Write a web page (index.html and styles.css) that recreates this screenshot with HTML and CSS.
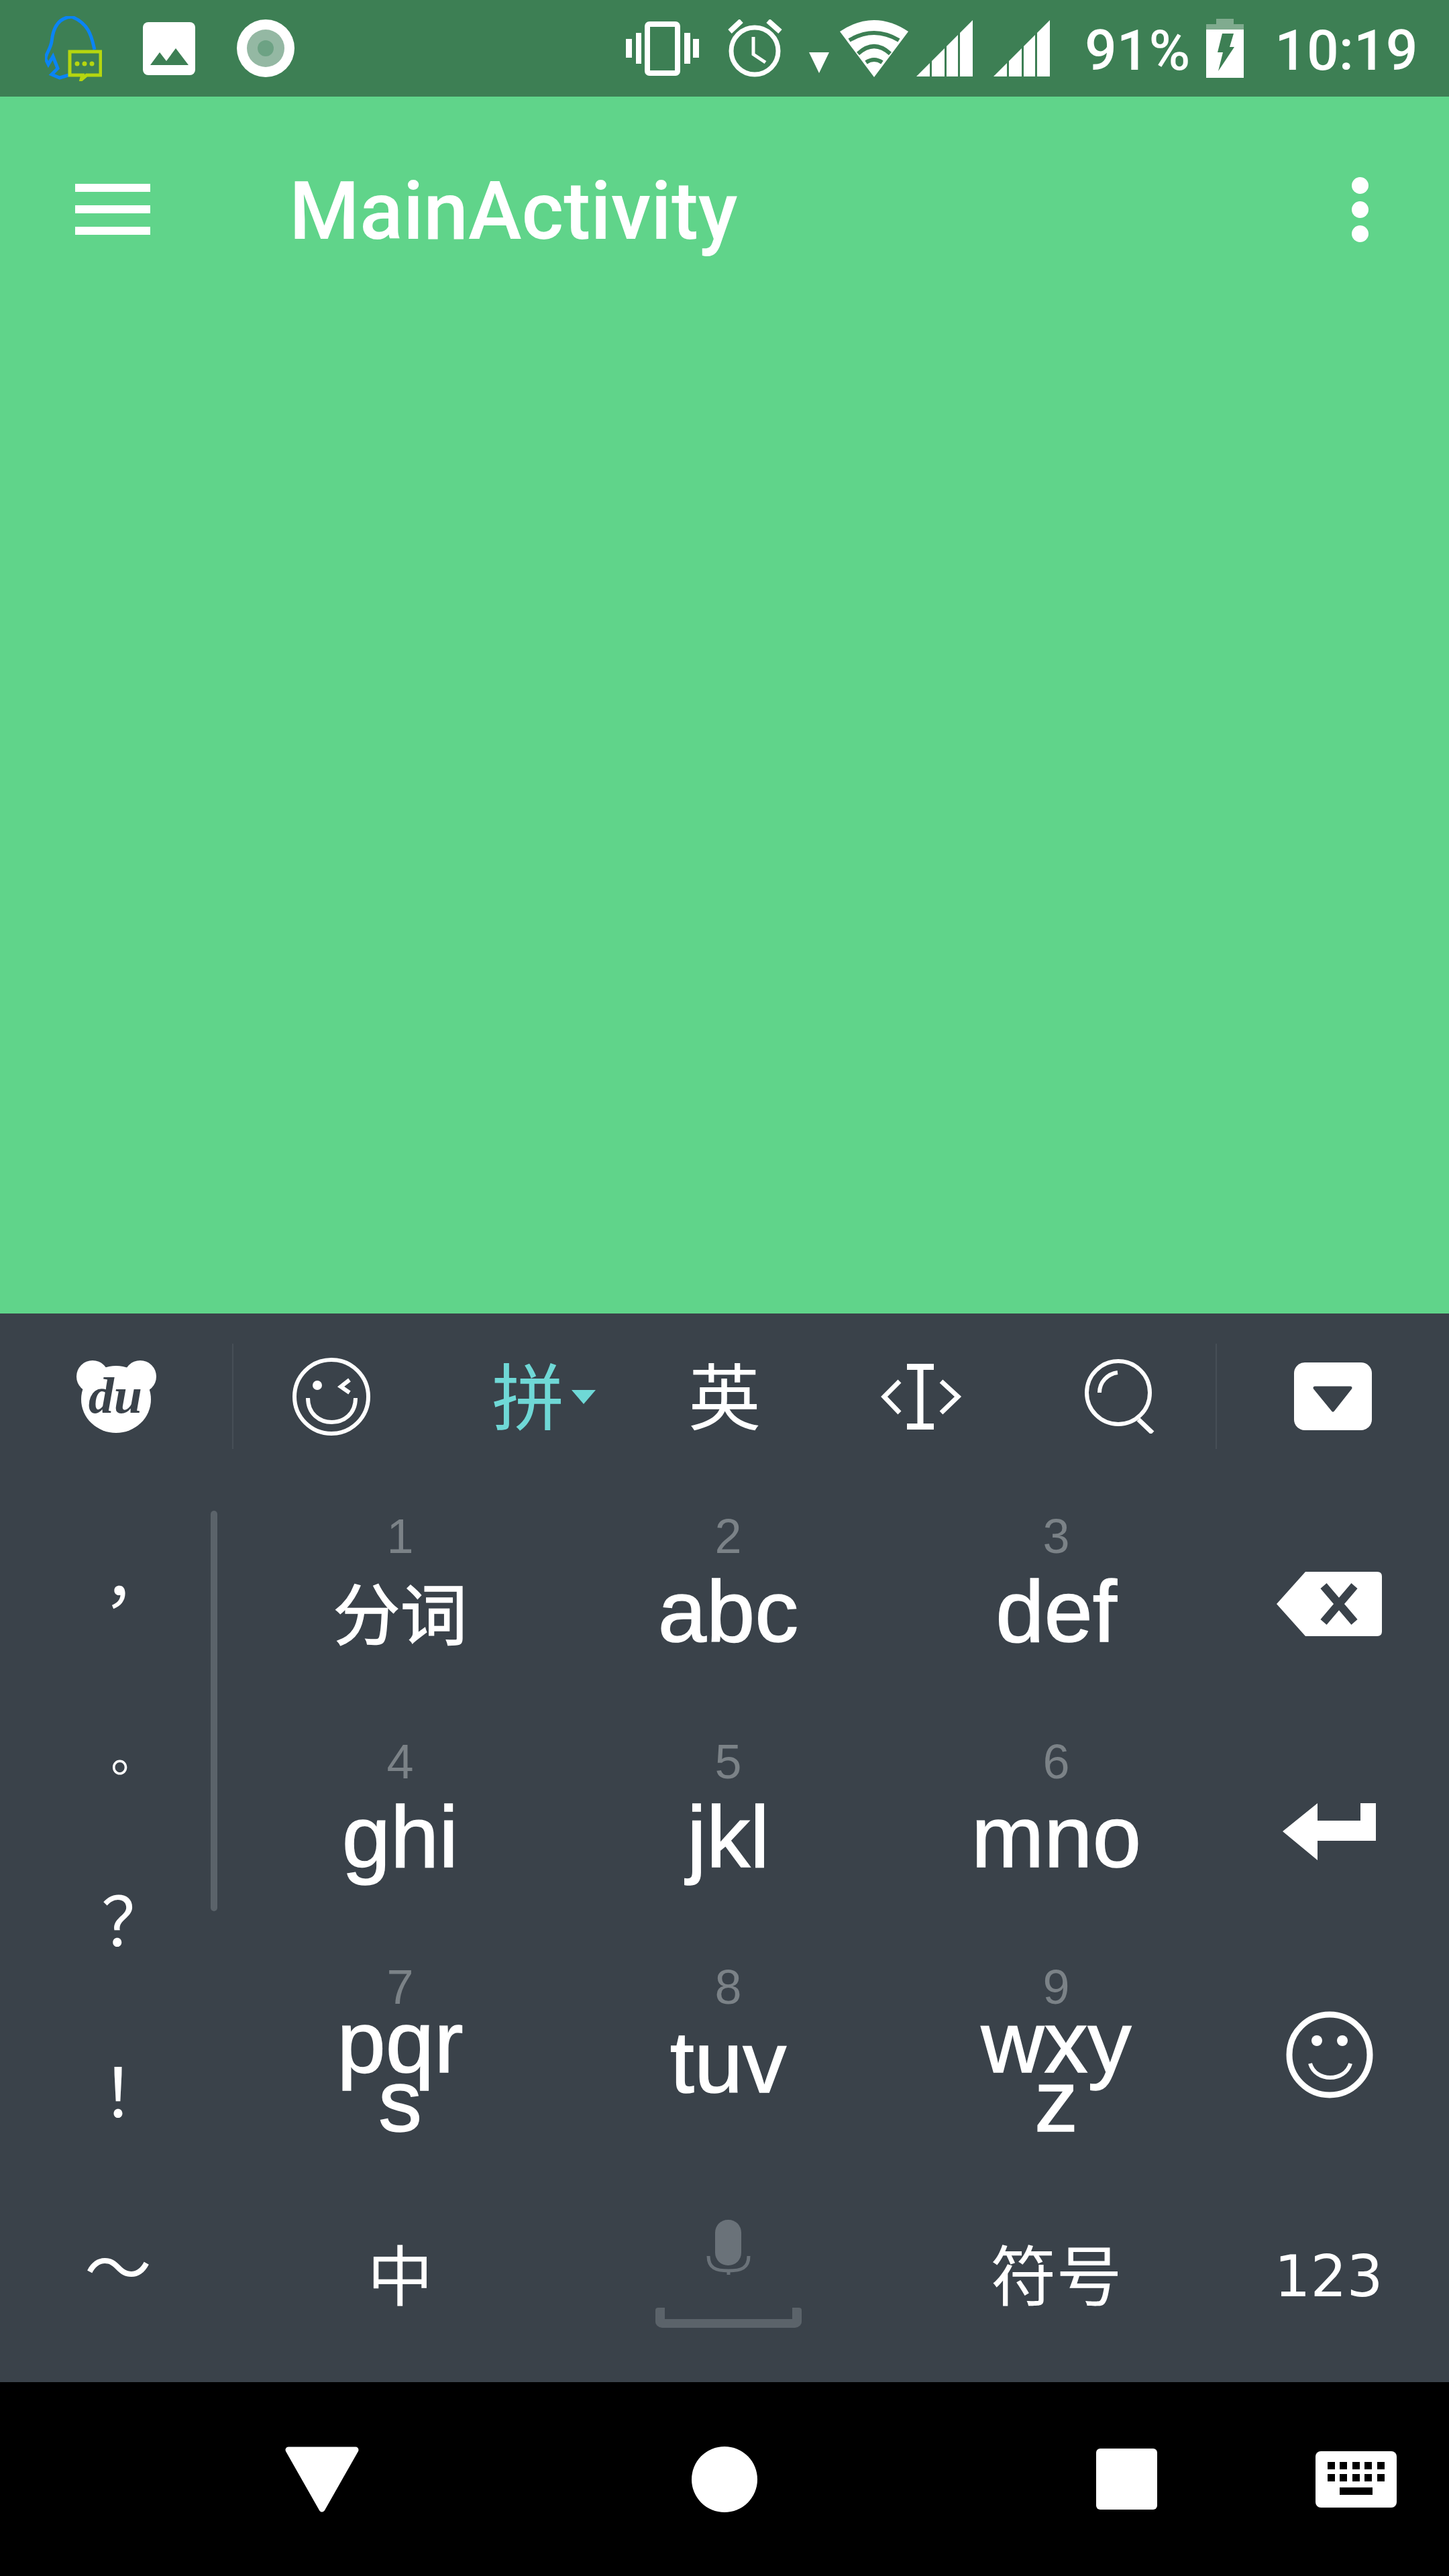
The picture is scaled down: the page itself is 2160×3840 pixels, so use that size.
FILE: index.html
```html
<!DOCTYPE html>
<html lang="zh-CN">
<head>
    <meta charset="UTF-8">
    <title>MainActivity</title>
    <link rel="stylesheet" href="styles.css">
</head>
<body>
    <div class="phone">
        <!-- Status bar -->
        <header class="status-bar">
            <svg class="st-chat" viewBox="0 0 85 97">
                <path d="M74 50 C70 35 68 12 40 1 C20 2 12 18 10 38 C8 50 1 56 1 64 L5 72 L12 60 L19 78 L10 87 L22 92 L35 88" fill="none" stroke="#0a84f5" stroke-width="5"/>
                <path d="M37 53 H83 V88 H62 L54 95 L56 88 H37 Z" fill="#3d7f54" stroke="#b5d60f" stroke-width="5"/>
                <circle cx="48" cy="71" r="3.5" fill="#b5d60f"/><circle cx="59" cy="71" r="3.5" fill="#b5d60f"/><circle cx="70" cy="71" r="3.5" fill="#b5d60f"/>
            </svg>
            <svg class="st-image" viewBox="0 0 78 79">
                <rect width="78" height="79" rx="8" fill="#fff"/>
                <path d="M11 64 L25 45 L35 58 L49 39 L68 64 Z" fill="#3d7f54"/>
            </svg>
            <svg class="st-record" viewBox="0 0 86 86">
                <circle cx="43" cy="43" r="43" fill="#fff"/><circle cx="43" cy="43" r="28" fill="#94b8a3"/><circle cx="43" cy="43" r="12" fill="#6da284"/>
            </svg>
            <svg class="st-vibrate" viewBox="0 0 109 81">
                <rect x="32" y="4" width="45" height="73" rx="3" fill="none" stroke="#fff" stroke-width="8"/>
                <path d="M0 26H9V54H0Z M15 17H23V63H15Z M87 17H96V63H87Z M100 26H109V54H100Z" fill="#fff"/>
            </svg>
            <svg class="st-alarm" viewBox="0 0 85 86">
                <circle cx="42" cy="47" r="35" fill="none" stroke="#fff" stroke-width="7"/>
                <path d="M40 26V52L58 64" fill="none" stroke="#fff" stroke-width="5"/>
                <path d="M22 2L5 18 M62 2L80 18" stroke="#fff" stroke-width="8"/>
            </svg>
            <svg class="st-arrow" viewBox="0 0 30 70"><path d="M0 39H30L15 70Z" fill="#fff"/></svg>
            <svg class="st-wifi" viewBox="0 0 102 85">
                <path d="M51 85 L0 17 Q51 -17 102 17 Z" fill="#fff"/>
                <path d="M14 30Q51 8 88 30 M27 50Q51 28 75 50 M39 63Q51 55 63 63" fill="none" stroke="#3d7f54" stroke-width="6"/>
            </svg>
            <svg class="st-signal" viewBox="0 0 84 84"><path d="M0 84L20 64V84Z M23 61L42 42V84H23Z M45 39L62 22V84H45Z M65 19L84 0V84H65Z" fill="#fff"/></svg>
            <svg class="st-signal st-signal-2" viewBox="0 0 84 84"><path d="M0 84L20 64V84Z M23 61L42 42V84H23Z M45 39L62 22V84H45Z M65 19L84 0V84H65Z" fill="#fff"/></svg>
            <span class="st-text st-percent">91%</span>
            <svg class="st-battery" viewBox="0 0 56 88">
                <path d="M15 0H41V8H56V16H0V8H15Z" fill="#fff" opacity="0.35"/>
                <rect y="16" width="56" height="72" fill="#fff"/>
                <path d="M24 22H41L35 42H42L18 78L25 50H17Z" fill="#3d7f54"/>
            </svg>
            <span class="st-text st-clock">10:19</span>
        </header>

        <!-- App area -->
        <main class="app">
            <div class="toolbar">
                <div class="menu-icon"><span></span><span></span><span></span></div>
                <h1 class="title">MainActivity</h1>
                <div class="more-icon"><span></span><span></span><span></span></div>
            </div>
        </main>

        <!-- Keyboard -->
        <section class="keyboard">
            <div class="kb-bar">
                <div class="bar-cell bar-left">
                    <svg class="ic-bear" viewBox="0 0 119 108">
                        <circle cx="24" cy="24" r="24" fill="#fff"/><circle cx="95" cy="24" r="24" fill="#fff"/>
                        <ellipse cx="59" cy="58" rx="52" ry="50" fill="#fff"/>
                        <text class="bear-text" x="58" y="78">du</text>
                    </svg>
                </div>
                <div class="bar-cell">
                    <svg class="ic-wink" viewBox="0 0 116 116">
                        <circle cx="58" cy="58" r="55" fill="none" stroke="#fff" stroke-width="6"/>
                        <circle cx="37" cy="41" r="7" fill="#fff"/>
                        <path d="M85 33L72 43L85 52" fill="none" stroke="#fff" stroke-width="6"/>
                        <path d="M23 60C23 108 94 108 94 60" fill="none" stroke="#fff" stroke-width="6"/>
                    </svg>
                </div>
                <div class="bar-cell bar-text bar-active">拼<span class="caret"></span></div>
                <div class="bar-cell bar-text">英</div>
                <div class="bar-cell">
                    <svg class="ic-cursor" viewBox="0 0 121 98">
                        <path d="M40 4.500H80 M40 93.500H80 M60 4V94" fill="none" stroke="#fff" stroke-width="9"/>
                        <path d="M29 26L6 49L29 73 M91 26L116 49L91 73" fill="none" stroke="#fff" stroke-width="7"/>
                    </svg>
                </div>
                <div class="bar-cell">
                    <svg class="ic-search" viewBox="0 0 104 111">
                        <circle cx="50" cy="50" r="47" fill="none" stroke="#fff" stroke-width="6"/>
                        <path d="M80 90L101 110" stroke="#fff" stroke-width="7"/>
                        <path d="M22 50C22 34 34 22 49 20" fill="none" stroke="#fff" stroke-width="6"/>
                    </svg>
                </div>
                <div class="bar-cell bar-right">
                    <svg class="ic-collapse" viewBox="0 0 116 101">
                        <rect width="116" height="101" rx="16" fill="#fff"/>
                        <path d="M31 38H84L58 71Z" fill="#3a424a" stroke="#3a424a" stroke-width="5" stroke-linejoin="round"/>
                    </svg>
                </div>
            </div>

            <div class="keypad">
                <div class="punct-list">
                    <div class="punct punct-comma">，</div>
                    <div class="punct punct-stop">。</div>
                    <div class="punct punct-ask">？</div>
                    <div class="punct punct-bang">！</div>
                    <div class="punct punct-tilde">～</div>
                </div>
                <div class="divider"></div>

                <div class="key"><span class="num">1</span><span class="letters cjk">分词</span></div>
                <div class="key"><span class="num">2</span><span class="letters">abc</span></div>
                <div class="key"><span class="num">3</span><span class="letters">def</span></div>
                <div class="side-key">
                    <svg class="ic-back" viewBox="0 0 157 96">
                        <path d="M43 0H150Q157 0 157 7V89Q157 96 150 96H43L0 48Z" fill="#fff"/>
                        <path d="M70 21L116 75 M116 21L70 75" stroke="#3a424a" stroke-width="12"/>
                    </svg>
                </div>

                <div class="key"><span class="num">4</span><span class="letters">ghi</span></div>
                <div class="key"><span class="num">5</span><span class="letters">jkl</span></div>
                <div class="key"><span class="num">6</span><span class="letters">mno</span></div>
                <div class="side-key">
                    <svg class="ic-enter" viewBox="0 0 139 85">
                        <path d="M0 42L52 0V26H116V0H139V56H52V85Z" fill="#fff"/>
                    </svg>
                </div>

                <div class="key"><span class="num">7</span><span class="letters letters-wrap">pqr<br>s</span></div>
                <div class="key"><span class="num">8</span><span class="letters">tuv</span></div>
                <div class="key"><span class="num">9</span><span class="letters letters-wrap">wxy<br>z</span></div>
                <div class="side-key">
                    <svg class="ic-smile" viewBox="0 0 130 130">
                        <circle cx="65" cy="65" r="60" fill="none" stroke="#fff" stroke-width="9"/>
                        <circle cx="46" cy="44" r="8" fill="#fff"/><circle cx="84" cy="44" r="8" fill="#fff"/>
                        <path d="M36 78C44 106 88 106 96 78" fill="none" stroke="#fff" stroke-width="6"/>
                    </svg>
                </div>

                <div class="bottom-key cjk">中</div>
                <div class="bottom-key space-key">
                    <svg class="ic-mic" viewBox="0 0 66 82">
                        <rect x="13" y="0" width="39" height="68" rx="19" fill="#6a7279"/>
                        <path d="M3 54C3 72 14 76 33 76C52 76 63 72 63 54" fill="none" stroke="#6a7279" stroke-width="5"/>
                        <path d="M33 74V82" stroke="#6a7279" stroke-width="5"/>
                    </svg>
                    <div class="space-bracket"></div>
                </div>
                <div class="bottom-key cjk symbols">符号</div>
                <div class="side-key nums">123</div>
            </div>
        </section>

        <!-- Navigation bar -->
        <footer class="nav-bar">
            <svg class="nav-back" viewBox="0 0 112 98"><path d="M6 5H106L56 93Z" fill="#fff" stroke="#fff" stroke-width="9" stroke-linejoin="round"/></svg>
            <div class="nav-home"></div>
            <div class="nav-recent"></div>
            <svg class="nav-keyboard" viewBox="0 0 121 84">
                <rect width="121" height="84" rx="8" fill="#fff"/>
                <path d="M18 16h11v11h-11z M36 16h11v11h-11z M55 16h11v11h-11z M73 16h11v11h-11z M92 16h11v11h-11z M18 34h11v11h-11z M36 34h11v11h-11z M55 34h11v11h-11z M73 34h11v11h-11z M92 34h11v11h-11z M36 54h49v11h-49z" fill="#000"/>
            </svg>
        </footer>
    </div>
</body>
</html>
```

FILE: styles.css
```css
body {
    margin: 0;
    background-color: #000;
    font-family: "Liberation Sans", Arial, sans-serif;
}
svg {
    display: block;
    flex-shrink: 0;
}
.phone {
    width: 2160px;
    height: 3840px;
    display: flex;
    flex-direction: column;
    overflow: hidden;
}

/* status bar */
.status-bar {
    height: 144px;
    background-color: #3d7f54;
    display: flex;
    align-items: center;
    color: #fff;
}
.st-chat { width: 85px; height: 97px; margin-left: 67px; }
.st-image { width: 78px; height: 79px; margin-left: 61px; }
.st-record { width: 86px; height: 86px; margin-left: 62px; }
.st-vibrate { width: 109px; height: 81px; margin-left: 494px; }
.st-alarm { width: 85px; height: 86px; margin-left: 41px; }
.st-arrow { width: 30px; height: 70px; margin-left: 38px; margin-top: 4px; }
.st-wifi { width: 102px; height: 85px; margin-left: 16px; }
.st-signal { width: 84px; height: 84px; margin-left: 12px; }
.st-signal-2 { margin-left: 31px; }
.st-battery { width: 56px; height: 88px; margin-left: 24px; }
.st-text {
    font-family: Roboto, sans-serif;
    font-size: 84px;
    font-weight: 500;
    line-height: 144px;
    padding-top: 8px;
}
.st-percent { margin-left: 52px; }
.st-clock { margin-left: 46px; }

/* app area */
.app {
    height: 1814px;
    background-color: #60d48a;
}
.toolbar {
    height: 336px;
    display: flex;
    align-items: center;
    color: #fff;
}
.menu-icon {
    width: 112px;
    margin-left: 112px;
    display: flex;
    flex-direction: column;
    gap: 20px;
}
.menu-icon span {
    height: 12px;
    background-color: #fff;
}
.title {
    margin: 6px 0 0 207px;
    font-family: Roboto, sans-serif;
    font-size: 120px;
    font-weight: 500;
    flex: 1;
}
.more-icon {
    margin-right: 120px;
    display: flex;
    flex-direction: column;
    gap: 11px;
}
.more-icon span {
    width: 25px;
    height: 25px;
    border-radius: 50%;
    background-color: #fff;
}

/* keyboard */
.keyboard {
    height: 1593px;
    background-color: #3a424a;
    color: #fff;
}
.kb-bar {
    height: 157px;
    padding: 45px 0 55px;
    display: grid;
    grid-template-columns: 348px repeat(5, 1fr) 348px;
    grid-template-rows: 157px;
}
.bar-cell {
    position: relative;
    display: flex;
    align-items: center;
    justify-content: center;
}
.bar-left { border-right: 2px solid #464e56; }
.bar-right { border-left: 2px solid #464e56; }
.bar-text {
    font-family: "Noto Sans CJK SC", sans-serif;
    font-size: 108px;
    line-height: 108px;
    padding-bottom: 12px;
    box-sizing: border-box;
}
.bar-active { color: #6fd8d6; }
.caret {
    position: absolute;
    left: 211px;
    top: 69px;
    width: 0;
    height: 0;
    border-left: 18px solid transparent;
    border-right: 18px solid transparent;
    border-top: 21px solid #6fd8d6;
}
.ic-bear { width: 119px; height: 108px; }
.bear-text {
    font-family: "Liberation Serif", serif;
    font-style: italic;
    font-weight: 700;
    font-size: 76px;
    fill: #3a424a;
    text-anchor: middle;
}
.ic-wink { width: 116px; height: 116px; }
.ic-cursor { width: 121px; height: 98px; }
.ic-search { width: 104px; height: 111px; margin-left: 6px; }
.ic-collapse { width: 116px; height: 101px; }

.keypad {
    position: relative;
    height: 1336px;
    display: grid;
    grid-template-columns: 352px 489px 489px 489px 341px;
    grid-template-rows: 336px 336px 336px 328px;
}
.punct-list {
    grid-column: 1;
    grid-row: 1 / 5;
    display: flex;
    flex-direction: column;
    font-family: "Noto Sans CJK SC", sans-serif;
    font-size: 100px;
}
.punct {
    box-sizing: border-box;
    height: 267px;
    display: flex;
    align-items: center;
    justify-content: center;
}
.punct-comma { padding: 0 0 10px 55px; }
.punct-stop { padding: 0 0 10px 48px; font-size: 70px; }
.punct-ask { padding: 0 0 50px 50px; }
.punct-bang { padding: 0 0 74px 50px; }
.punct-tilde { padding-bottom: 84px; }
.divider {
    position: absolute;
    left: 314px;
    top: 37px;
    width: 10px;
    height: 597px;
    border-radius: 5px;
    background-color: #5b636a;
}
.key {
    display: flex;
    flex-direction: column;
    align-items: center;
}
.num {
    margin-top: 39px;
    font-size: 72px;
    line-height: 72px;
    color: #7b8287;
}
.letters {
    flex: 1;
    display: flex;
    align-items: center;
    font-size: 130px;
    line-height: 88px;
    padding-bottom: 74px;
    text-align: center;
    -webkit-text-stroke: 1.5px #fff;
}
.letters-wrap {
    display: block;
    flex: none;
    margin-top: 2px;
    padding-bottom: 0;
}
.cjk {
    font-family: "Noto Sans CJK SC", sans-serif;
}
.letters.cjk {
    font-size: 100px;
    padding-bottom: 76px;
}
.side-key {
    display: flex;
    align-items: center;
    justify-content: center;
}
.ic-back { width: 157px; height: 96px; margin: 16px 0 0 -16px; }
.ic-enter { width: 139px; height: 85px; margin: 22px 0 0 -16px; }
.ic-smile { width: 130px; height: 130px; margin: 16px 0 0 -16px; }
.bottom-key {
    display: flex;
    flex-direction: column;
    align-items: center;
    justify-content: center;
    font-size: 98px;
    padding-bottom: 2px;
}
.space-key {
    justify-content: flex-start;
    padding: 86px 0 0;
}
.ic-mic { width: 66px; height: 82px; }
.space-bracket {
    box-sizing: border-box;
    width: 218px;
    height: 30px;
    margin-top: 49px;
    border: solid #5b636a;
    border-width: 0 14px 13px;
    border-radius: 4px 4px 10px 10px;
}
.nums {
    font-family: "DejaVu Sans", sans-serif;
    font-size: 85px;
    padding-top: 12px;
    margin-left: -18px;
}

/* navigation bar */
.nav-bar {
    height: 289px;
    background-color: #000;
    display: flex;
    align-items: center;
}
.nav-back { width: 112px; height: 98px; margin-left: 424px; }
.nav-home {
    width: 98px;
    height: 98px;
    margin-left: 495px;
    border-radius: 50%;
    background-color: #fff;
}
.nav-recent {
    width: 91px;
    height: 91px;
    margin-left: 505px;
    border-radius: 6px;
    background-color: #fff;
}
.nav-keyboard { width: 121px; height: 84px; margin-left: 236px; }
```
